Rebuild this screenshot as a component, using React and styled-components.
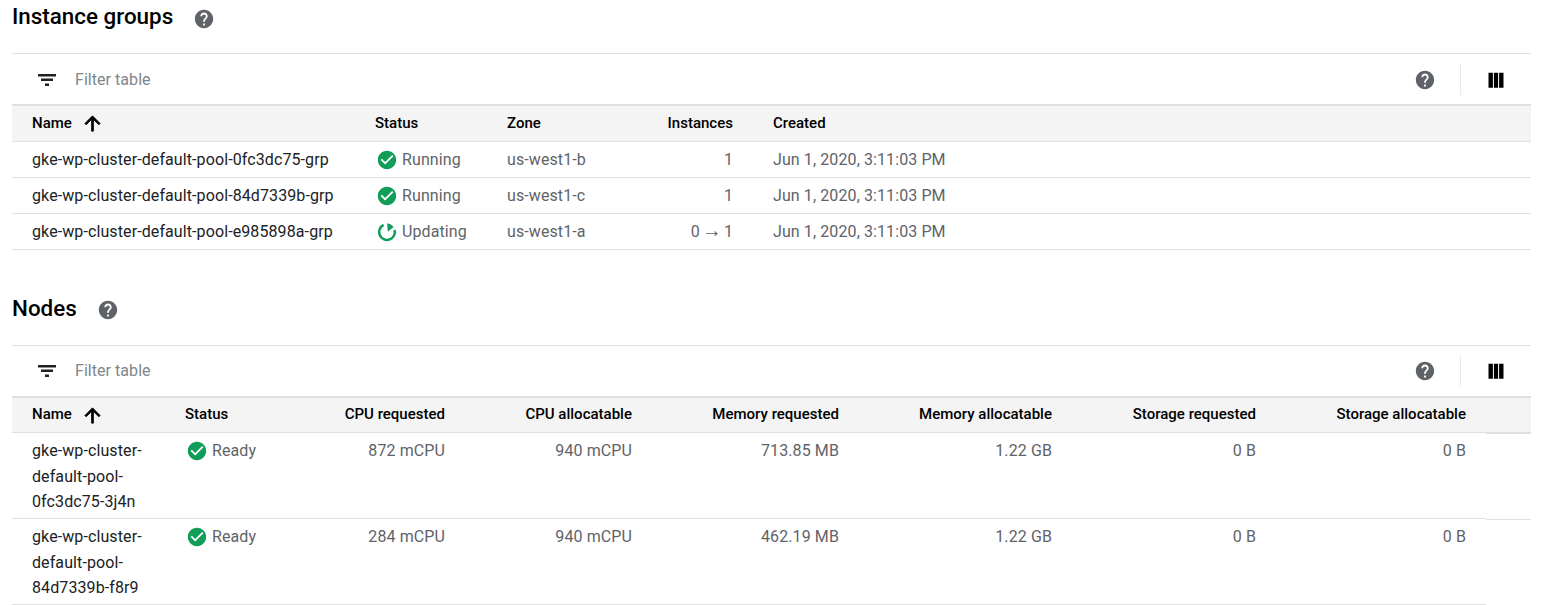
import React from "react";
import styled, { createGlobalStyle } from "styled-components";

const Global = createGlobalStyle`
  html, body { margin: 0; padding: 0; background: #fff; }
  body { font-family: Roboto, "Liberation Sans", sans-serif; color: #202124; }
`;

const Page = styled.div`
  width: 1519px;
  margin-left: 12px;
  height: 605px;
  overflow: hidden;
`;
const Section = styled.section`
  margin-top: ${(p) => p.$top}px;
`;
const TitleRow = styled.div`
  display: flex;
  align-items: center;
  height: 34px;
  margin-bottom: ${(p) => p.$below}px;
`;
const Title = styled.h2`
  margin: ${(p) => (p.$lift ? -2 : 0)}px 0 0;
  font-size: 22.4px;
  line-height: 34px;
  font-weight: 500;
  color: #000;
`;
const HelpWrap = styled.span`
  display: flex;
  margin-left: ${(p) => p.$left || 0}px;
  margin-top: ${(p) => (p.$left ? 3 : 0)}px;
  color: #5f6368;
`;
const Toolbar = styled.div`
  display: flex;
  align-items: center;
  height: 51px;
  box-sizing: border-box;
  border-top: 1px solid #e0e0e0;
  padding-left: 23px;
  padding-bottom: ${(p) => (p.$lift ? 2 : 0)}px;
`;
const FilterIcon = styled.span`
  display: flex;
  margin-top: 1px;
  color: #202124;
`;
const FilterText = styled.span`
  margin-left: 16px;
  flex: 1;
  font-size: 16px;
  letter-spacing: 0.05px;
  color: #80868b;
`;
const ToolRight = styled.div`
  display: flex;
  align-items: center;
  height: 32px;
  margin-top: 1px;
`;
const Divider = styled.span`
  width: 1px;
  height: 31px;
  background: #e8eaed;
  margin: 0 23px 0 24px;
`;
const ColumnsIcon = styled.span`
  display: flex;
  margin-right: 23px;
  color: #000;
`;
const Grid = styled.div`
  display: grid;
  grid-template-columns: ${(p) => p.$cols};
  box-sizing: border-box;
`;
const HeadRow = styled(Grid)`
  height: ${(p) => p.$height}px;
  background: #f4f4f4;
  border-top: 2px solid #e0e0e0;
  border-bottom: 1px solid #e0e0e0;
  padding-bottom: 2px;
  align-items: center;
  font-size: 15px;
  font-weight: 500;
  letter-spacing: 0.01px;
  color: #000;
`;
const BodyRow = styled(Grid)`
  flex: ${(p) => (p.$fixed ? "0 0 1474px" : "1")};
  border-bottom: 1px solid #e0e0e0;
  font-size: 16px;
  letter-spacing: 0.1px;
  line-height: 25.6px;
  height: ${(p) => p.$height}px;
  align-items: ${(p) => (p.$tall ? "start" : "center")};
  padding-top: ${(p) => (p.$tall ? 5 : 0)}px;
`;
const RowLine = styled.div`
  display: flex;
  align-items: flex-start;
`;
const Filler = styled.div`
  flex: 1;
  height: 1px;
  background: #e0e0e0;
`;
const Cell = styled.div`
  padding: 0 20px;
  text-align: ${(p) => (p.$right ? "right" : "left")};
  color: ${(p) => (p.$strong ? "#202124" : "#5f6368")};
`;
const HeadCell = styled.div`
  padding: 0 20px;
  display: flex;
  align-items: center;
  justify-content: ${(p) => (p.$right ? "flex-end" : "flex-start")};
`;
const SortIcon = styled.span`
  display: flex;
  margin-left: 9px;
  margin-top: 2px;
`;
const Status = styled.span`
  display: flex;
  align-items: center;
  margin-left: 1px;
`;
const StatusIcon = styled.span`
  display: flex;
  margin-right: 4px;
  color: #0f9d58;
`;
const Arrow = styled.span`
  font-family: "Liberation Sans", sans-serif;
  font-size: 20px;
  line-height: 0;
  letter-spacing: 0;
  margin: 0 -2px;
`;

const Icon = ({ d, size = 24, bold }) => (
  <svg
    width={size}
    height={size}
    viewBox="0 0 24 24"
    fill="currentColor"
    stroke={bold ? "currentColor" : "none"}
    strokeWidth={bold || 0}
    aria-hidden="true"
  >
    <path d={d} />
  </svg>
);
const HELP = "M12 2C6.48 2 2 6.48 2 12s4.48 10 10 10 10-4.48 10-10S17.52 2 12 2zm1 17h-2v-2h2v2zm2.07-7.75l-.9.92C13.45 12.9 13 13.5 13 15h-2v-.5c0-1.1.45-2.1 1.17-2.83l1.24-1.26c.37-.36.59-.86.59-1.41 0-1.1-.9-2-2-2s-2 .9-2 2H8c0-2.21 1.79-4 4-4s4 1.79 4 4c0 .88-.36 1.68-.93 2.25z";
const FILTER = "M10 18h4v-2.4h-4v2.4zM3 6v2.4h18V6H3zm3 7h12v-2.4H6V13z";
const COLS = "M4.5 4.7h4.4v15H4.5zM9.9 4.7h4.2v15H9.9zM15.1 4.7h4.4v15h-4.4z";
const UP = "M4 12l1.41 1.41L11 7.83V20h2V7.83l5.58 5.59L20 12l-8-8-8 8z";
const CHECK = "M12 2C6.48 2 2 6.48 2 12s4.48 10 10 10 10-4.48 10-10S17.52 2 12 2zm-2 15l-5-5 1.41-1.41L10 14.17l7.59-7.59L19 8l-9 9z";

const UpdatingIcon = () => (
  <svg width="22" height="22" viewBox="0 0 24 24" aria-hidden="true">
    <path d="M8.3 4.25A8.6 8.6 0 1 0 20.3 9.8" fill="none" stroke="#0f9d58" strokeWidth="2.8" />
    <path d="M12.2 2.6A9.4 9.4 0 0 1 19.2 6.6L12.8 11.6z" fill="#0f9d58" />
  </svg>
);

const Tools = ({ lift }) => (
  <Toolbar $lift={lift}>
    <FilterIcon><Icon d={FILTER} /></FilterIcon>
    <FilterText>Filter table</FilterText>
    <ToolRight>
      <HelpWrap><Icon d={HELP} size={22} /></HelpWrap>
      <Divider />
      <ColumnsIcon><Icon d={COLS} /></ColumnsIcon>
    </ToolRight>
  </Toolbar>
);

const SortedName = () => (
  <HeadCell>
    Name
    <SortIcon><Icon d={UP} size={23} bold={0.8} /></SortIcon>
  </HeadCell>
);

const groupCols = "343px 132px 153px 113px 1fr";
const groups = [
  ["gke-wp-cluster-default-pool-0fc3dc75-grp", "Running", "us-west1-b", "1"],
  ["gke-wp-cluster-default-pool-84d7339b-grp", "Running", "us-west1-c", "1"],
  ["gke-wp-cluster-default-pool-e985898a-grp", "Updating", "us-west1-a", <>0 <Arrow>→</Arrow> 1</>],
];

const nodeCols = "153px 135px 165px 187px 207px 213px 204px 210px";
const nodeHeads = ["CPU requested", "CPU allocatable", "Memory requested", "Memory allocatable", "Storage requested", "Storage allocatable"];
const nodes = [
  ["gke-wp-cluster-default-pool-0fc3dc75-3j4n", ["872 mCPU", "940 mCPU", "713.85 MB", "1.22 GB", "0 B", "0 B"]],
  ["gke-wp-cluster-default-pool-84d7339b-f8r9", ["284 mCPU", "940 mCPU", "462.19 MB", "1.22 GB", "0 B", "0 B"]],
];

export default function App() {
  return (
    <Page>
      <Global />
      <Section $top={0}>
        <TitleRow $below={19}>
          <Title $lift>Instance groups</Title>
          <HelpWrap $left={20}><Icon d={HELP} size={22} /></HelpWrap>
        </TitleRow>
        <Tools />
        <HeadRow $cols={groupCols} $height={38}>
          <SortedName />
          <HeadCell>Status</HeadCell>
          <HeadCell>Zone</HeadCell>
          <HeadCell $right>Instances</HeadCell>
          <HeadCell>Created</HeadCell>
        </HeadRow>
        {groups.map(([name, status, zone, count]) => (
          <RowLine key={name}>
            <BodyRow $cols={groupCols} $height={36}>
              <Cell $strong>{name}</Cell>
              <Cell>
                <Status>
                  <StatusIcon>{status === "Updating" ? <UpdatingIcon /> : <Icon d={CHECK} size={22} />}</StatusIcon>
                  {status}
                </Status>
              </Cell>
              <Cell>{zone}</Cell>
              <Cell $right>{count}</Cell>
              <Cell>Jun 1, 2020, 3:11:03 PM</Cell>
            </BodyRow>
          </RowLine>
        ))}
      </Section>
      <Section $top={41}>
        <TitleRow $below={20}>
          <Title>Nodes</Title>
          <HelpWrap $left={20}><Icon d={HELP} size={22} /></HelpWrap>
        </TitleRow>
        <Tools lift />
        <HeadRow $cols={nodeCols} $height={37}>
          <SortedName />
          <HeadCell>Status</HeadCell>
          {nodeHeads.map((h) => <HeadCell $right key={h}>{h}</HeadCell>)}
        </HeadRow>
        {nodes.map(([name, values]) => (
          <RowLine key={name}>
            <BodyRow $fixed $tall $cols={nodeCols} $height={86}>
              <Cell $strong>{name}</Cell>
              <Cell>
                <Status>
                  <StatusIcon><Icon d={CHECK} size={22} /></StatusIcon>
                  Ready
                </Status>
              </Cell>
              {values.map((v, i) => <Cell $right key={i}>{v}</Cell>)}
            </BodyRow>
            <Filler />
          </RowLine>
        ))}
      </Section>
    </Page>
  );
}
